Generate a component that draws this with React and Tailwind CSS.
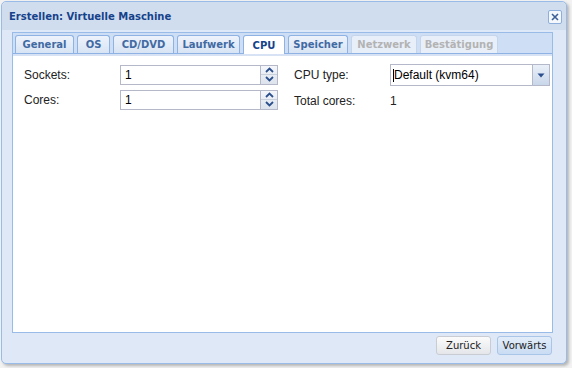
import React from 'react';

const tabs = [
  { label: 'General', w: 59 },
  { label: 'OS', w: 33 },
  { label: 'CD/DVD', w: 61 },
  { label: 'Laufwerk', w: 63 },
  { label: 'CPU', w: 42, active: true },
  { label: 'Speicher', w: 60 },
  { label: 'Netzwerk', w: 66, disabled: true },
  { label: 'Bestätigung', w: 78, disabled: true },
];

const Spinner = () => (
  <div className="w-[17px] h-full flex flex-col border-l border-[#b5b8c8] bg-gradient-to-b from-[#f4f6fa] to-[#dde3ec]">
    <div className="flex-1 flex items-center justify-center border-b border-[#c8d0dc]">
      <svg width="9" height="6" viewBox="0 0 9 6"><path d="M1 5 L4.5 1.5 L8 5" fill="none" stroke="#2b4f8c" strokeWidth="1.8" /></svg>
    </div>
    <div className="flex-1 flex items-center justify-center">
      <svg width="9" height="6" viewBox="0 0 9 6"><path d="M1 1 L4.5 4.5 L8 1" fill="none" stroke="#2b4f8c" strokeWidth="1.8" /></svg>
    </div>
  </div>
);

const NumField = ({ value }) => (
  <div className="w-[158px] h-[20px] flex border border-[#b5b8c8] bg-white">
    <div className="flex-1 pl-[4px] pt-[2px] text-[12px] leading-[14px] text-black">{value}</div>
    <Spinner />
  </div>
);

export default function App() {
  return (
    <div className="w-[572px] h-[368px] bg-[#f2f2f2] overflow-hidden" style={{ fontFamily: '"DejaVu Sans", Tahoma, sans-serif' }}>
      <div className="ml-[1px] mt-[1px] w-[566px] h-[363px] flex flex-col rounded-[5px] border border-[#99bbe8] bg-[#dfe8f6] shadow-[2px_2px_3px_rgba(0,0,0,0.25)]">
        {/* Header */}
        <div className="h-[28px] flex items-center justify-between pl-[7px] pr-[4px] bg-[#d0ddee] rounded-t-[5px]">
          <span className="text-[10px] font-bold text-[#15428b]">Erstellen: Virtuelle Maschine</span>
          <div className="w-[14px] h-[14px] mt-[1px] flex items-center justify-center rounded-[2px] border border-[#8eaedb] bg-[#f4f8fd]">
            <svg width="8" height="8" viewBox="0 0 8 8"><path d="M1 1 L7 7 M7 1 L1 7" stroke="#3c5f98" strokeWidth="1.6" /></svg>
          </div>
        </div>

        {/* Body */}
        <div className="flex-1 flex flex-col px-[4px] pt-[2px] pb-[8px]">
          <div className="flex-1 flex flex-col border border-[#99bbe8] bg-white ml-[6px] mr-[9px]">
            {/* Tab strip */}
            <div className="h-[21px] flex items-end gap-[3px] pl-[2px] bg-[#cedff5] border-b border-[#8db2e3]">
              {tabs.map((t) => (
                <div
                  key={t.label}
                  style={{ width: t.w }}
                  className={
                    'h-[18px] flex items-center justify-center rounded-t-[3px] border border-b-0 text-[10px] font-bold ' +
                    (t.active
                      ? 'bg-white border-[#8db2e3] text-[#15428b] h-[19px] -mb-px'
                      : t.disabled
                      ? 'bg-[#e8eff9] border-[#c5d5eb] text-[#b3b3b3]'
                      : 'bg-gradient-to-b from-[#eef3fb] to-[#d8e4f4] border-[#8db2e3] text-[#416aa3]')
                  }
                >
                  {t.label}
                </div>
              ))}
            </div>
            <div className="h-[2px] bg-[#d7e3f4]" />

            {/* Form */}
            <div className="flex-1 flex gap-[12px] pl-[11px] pt-[8px]" style={{ fontFamily: '"Liberation Sans", Arial, sans-serif' }}>
              <div className="w-[258px] flex flex-col gap-[4px]">
                <div className="h-[21px] flex items-center">
                  <span className="w-[96px] text-[12px] text-[#222]">Sockets:</span>
                  <NumField value="1" />
                </div>
                <div className="h-[21px] flex items-center">
                  <span className="w-[96px] text-[12px] text-[#222]">Cores:</span>
                  <NumField value="1" />
                </div>
              </div>
              <div className="flex flex-col gap-[4px]">
                <div className="h-[22px] flex items-center">
                  <span className="w-[96px] text-[12px] text-[#222]">CPU type:</span>
                  <div className="w-[160px] h-[22px] flex border border-[#b5b8c8] bg-white">
                    <div className="flex-1 pl-[2px] flex items-center text-[12px] text-black">
                      <span className="w-px h-[13px] bg-black" />
                      <span>Default (kvm64)</span>
                    </div>
                    <div className="w-[17px] flex items-center justify-center border-l border-[#b5b8c8] bg-gradient-to-b from-[#eaf0f8] to-[#c9d7ea]">
                      <svg width="8" height="5" viewBox="0 0 8 5"><path d="M0.5 0.5 L7.5 0.5 L4 4.5 Z" fill="#2b4f8c" /></svg>
                    </div>
                  </div>
                </div>
                <div className="h-[21px] flex items-center">
                  <span className="w-[96px] text-[12px] text-[#222]">Total cores:</span>
                  <span className="text-[12px] text-[#222]">1</span>
                </div>
              </div>
            </div>
          </div>

          {/* Buttons */}
          <div className="h-[22px] flex items-end justify-end gap-[6px] mr-[10px]">
            <div className="w-[55px] h-[19px] flex items-center justify-center rounded-[3px] border border-[#c9cdd3] bg-gradient-to-b from-[#fbfbfb] to-[#e4e6e9] text-[10px] text-[#222]">
              Zurück
            </div>
            <div className="w-[55px] h-[19px] flex items-center justify-center rounded-[3px] border border-[#a9c5e8] bg-gradient-to-b from-[#e3edf9] to-[#c9dcf3] text-[10px] text-[#222]">
              Vorwärts
            </div>
          </div>
        </div>
      </div>
    </div>
  );
}
